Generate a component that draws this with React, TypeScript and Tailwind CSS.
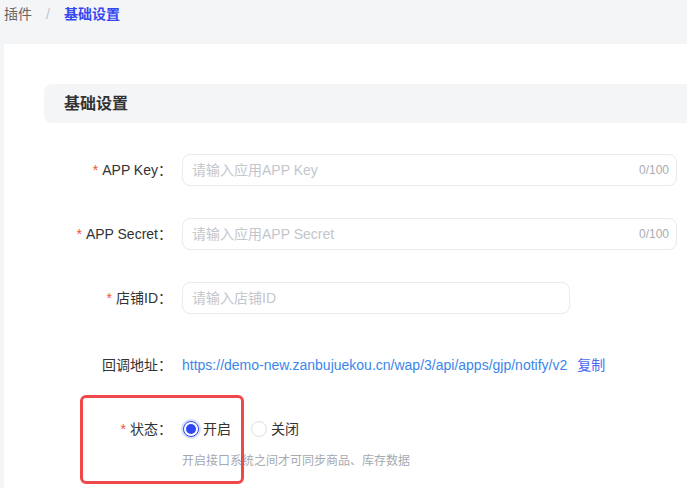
import { useState } from 'react';

const font = { fontFamily: '"Liberation Sans", "Noto Sans CJK SC", sans-serif' };

const Label = ({ text, required }: { text: string; required?: boolean }) => (
  <div className="flex w-[128px] shrink-0 items-center justify-end text-[14px] text-[#333]">
    {required && <span className="mr-[4px] text-[14px] text-[#f0553c]">*</span>}
    <span>{text}：</span>
  </div>
);

const TextInput = ({ placeholder, width, counter }: { placeholder: string; width: string; counter?: boolean }) => (
  <div className={`flex h-[32px] items-center rounded-[8px] border border-[#e9eaee] bg-white pl-[9px] pr-[7px] ${width}`}>
    <input
      className="min-w-0 flex-1 bg-transparent text-[14px] text-[#333] outline-none placeholder:text-[#c3c6cc]"
      placeholder={placeholder}
      style={font}
    />
    {counter && <span className="text-[12px] text-[#a8abb2]">0/100</span>}
  </div>
);

const Radio = ({ checked, label, onClick }: { checked: boolean; label: string; onClick: () => void }) => (
  <button onClick={onClick} className="flex items-center text-[14px] text-[#333]" style={font}>
    <span
      className={
        checked
          ? 'flex h-[16px] w-[16px] items-center justify-center rounded-full border border-[#2f47f0] bg-white shadow-[0_0_0_2px_rgba(47,71,240,0.18)]'
          : 'h-[16px] w-[16px] rounded-full border border-[#dcdfe6] bg-white'
      }
    >
      {checked && <span className="h-[10px] w-[10px] rounded-full bg-[#2f47f0]" />}
    </span>
    <span className="ml-[4px]">{label}</span>
  </button>
);

export default function App() {
  const [enabled, setEnabled] = useState(true);

  return (
    <div className="h-[488px] w-full overflow-hidden bg-[#f4f5f7]" style={font}>
      <div className="flex h-[28px] items-center pl-[4px] text-[14px]">
        <span className="text-[#666]">插件</span>
        <span className="mx-[14px] text-[#c0c4cc]">/</span>
        <span className="font-bold text-[#3548f2]">基础设置</span>
      </div>

      <div className="relative ml-[4px] mt-[16px] h-[500px] w-[740px] bg-white pl-[40px] pt-[40px]">
        <div className="flex h-[39px] items-center rounded-l-[8px] bg-[#f4f5f7] pl-[20px] text-[16px] font-bold text-[#333]">
          基础设置
        </div>

        <div className="mt-[31px] flex flex-col">
          <div className="flex items-center gap-[10px]">
            <Label text="APP Key" required />
            <TextInput placeholder="请输入应用APP Key" width="w-[495px]" counter />
          </div>
          <div className="mt-[32px] flex items-center gap-[10px]">
            <Label text="APP Secret" required />
            <TextInput placeholder="请输入应用APP Secret" width="w-[495px]" counter />
          </div>
          <div className="mt-[32px] flex items-center gap-[10px]">
            <Label text="店铺ID" required />
            <TextInput placeholder="请输入店铺ID" width="w-[388px]" />
          </div>
          <div className="mt-[35px] flex h-[32px] items-center gap-[10px]">
            <Label text="回调地址" />
            <span className="text-[14px] text-[#3b86ea]">https://demo-new.zanbujuekou.cn/wap/3/api/apps/gjp/notify/v2</span>
            <button className="text-[14px] text-[#4a6af0]">复制</button>
          </div>
          <div className="mt-[32px] flex h-[32px] items-center gap-[10px]">
            <Label text="状态" required />
            <div className="flex items-center gap-[20px] pl-[1px]">
              <Radio checked={enabled} label="开启" onClick={() => setEnabled(true)} />
              <Radio checked={!enabled} label="关闭" onClick={() => setEnabled(false)} />
            </div>
          </div>
          <p className="mt-[8px] pl-[138px] text-[12px] leading-[16px] text-[#a6a9b0]">开启接口系统之间才可同步商品、库存数据</p>
        </div>

        <div className="pointer-events-none absolute left-[76px] top-[351px] h-[89px] w-[164px] rounded-[6px] border-[3px] border-[#f04848]" />
      </div>
    </div>
  );
}
